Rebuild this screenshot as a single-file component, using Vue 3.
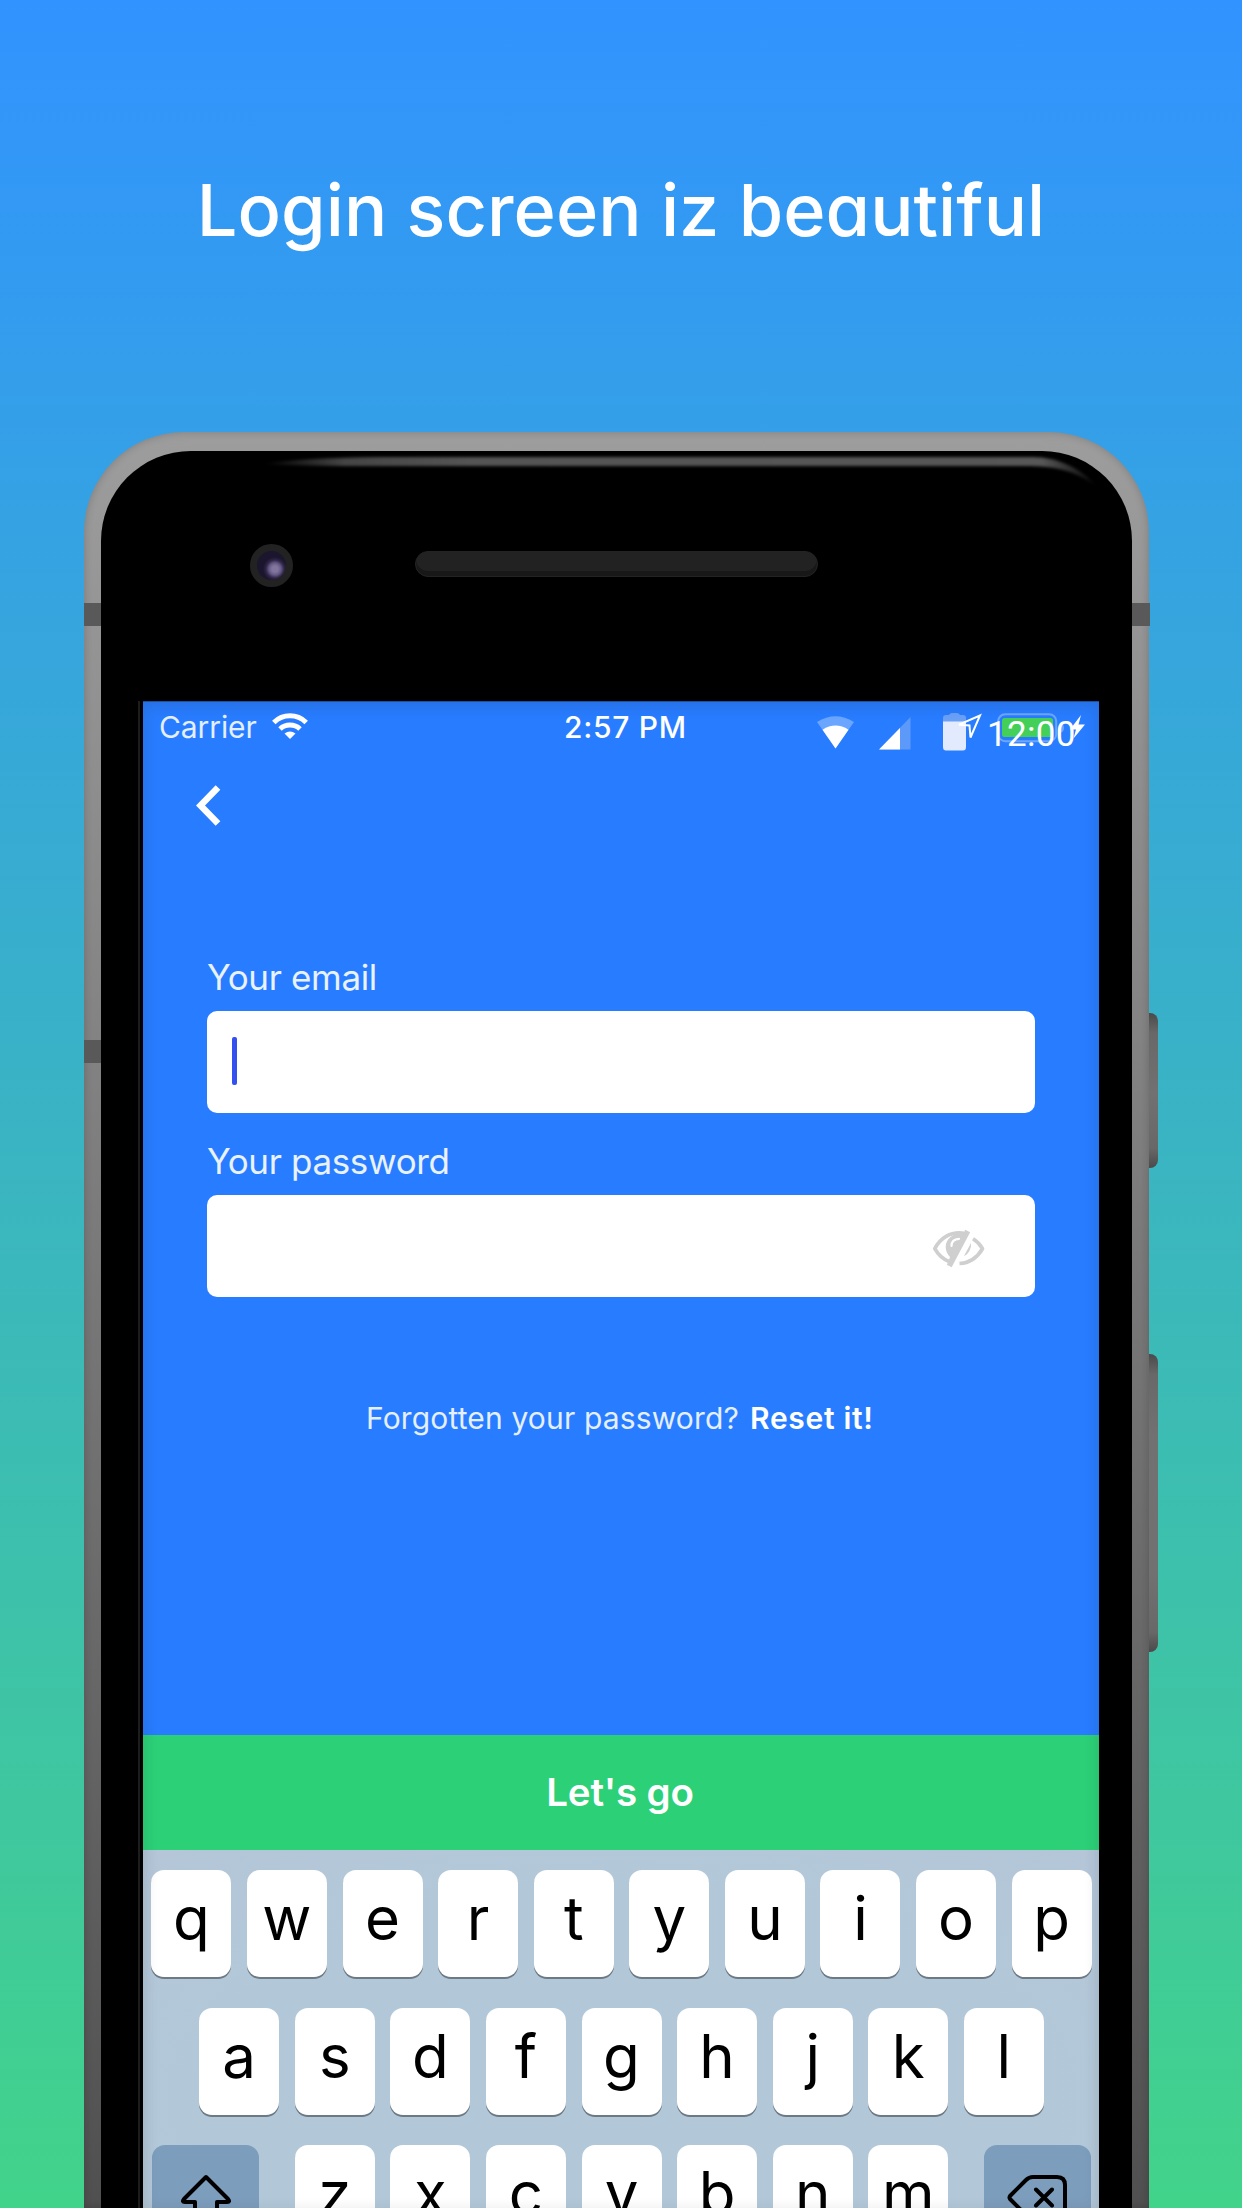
<script setup>
const topRow = 'qwertyuiop'.split('')
const middleRow = 'asdfghjkl'.split('')
const bottomRow = 'zxcvbnm'.split('')
</script>

<template>
  <main class="page">
    <h1 class="headline">Login screen iz beautiful</h1>

    <div class="phone">
      <i class="band band-left"></i>
      <i class="band band-right"></i>
      <i class="band band-lower"></i>
      <i class="side-button power"></i>
      <i class="side-button volume"></i>

      <div class="glass">
        <svg class="glare" width="1031" height="60" viewBox="0 0 1031 60">
          <defs>
            <linearGradient id="glare-fade" gradientUnits="userSpaceOnUse" x1="160" y1="0" x2="1000" y2="0">
              <stop offset="0" stop-color="#fff" stop-opacity="0" />
              <stop offset=".1" stop-color="#fff" stop-opacity=".27" />
              <stop offset=".25" stop-color="#fff" stop-opacity=".33" />
              <stop offset=".93" stop-color="#fff" stop-opacity=".34" />
              <stop offset="1" stop-color="#fff" stop-opacity="0" />
            </linearGradient>
            <filter id="glare-blur" x="-5%" y="-60%" width="110%" height="220%"><feGaussianBlur stdDeviation="1.8" /></filter>
          </defs>
          <path d="M162 13Q200 6.500 280 6H932C956 6 980 17 994 34C974 20 955 15 925 15H280Q205 15 162 13Z" fill="url(#glare-fade)" filter="url(#glare-blur)" />
        </svg>
        <div class="sensors">
          <div class="camera"></div>
          <div class="speaker"></div>
        </div>

        <section class="screen">
          <header class="status">
            <div class="carrier">
              <span>Carrier</span>
              <svg width="36" height="27" viewBox="0 0 36 27">
                <g fill="none" stroke="#fff" stroke-width="5">
                  <path d="M1.800 9.500C11 .6 25 .6 34.200 9.500" />
                  <path d="M8 16C13.500 10.800 22.500 10.800 28 16" />
                </g>
                <path d="M12.500 20.500Q18 16.500 23.500 20.500L18 26Z" fill="#fff" />
              </svg>
            </div>
            <span class="time">2:57 PM</span>
            <div class="battery-ios">
              <svg width="90" height="30" viewBox="0 0 90 30">
                <rect x="1.200" y="1.200" width="58" height="27" rx="7" fill="none" stroke="#6ca7ff" stroke-width="2" />
                <rect x="5" y="5" width="51" height="19" rx="2.500" fill="#44d058" />
                <path d="M63 10Q67 11 67 15T63 20Z" fill="#6ca7ff" />
                <path d="M84 2L73 16.500H79L76.500 25.500L88 11.500H81.500Z" fill="#fff" />
              </svg>
            </div>
            <div class="android-status">
              <svg width="37" height="33" viewBox="0 0 37 33">
                <path d="M0 6Q18.500 -5.500 37 6L18.500 32.500Z" fill="#6aa5ff" />
                <path d="M5.500 13.700Q18.500 5.500 31.500 13.700L18.500 32.500Z" fill="#fff" />
              </svg>
              <svg class="signal" width="32" height="33" viewBox="0 0 32 33">
                <path d="M31.500 0V32.500H0Z" fill="#5d99f8" />
                <path d="M21 11V32.500H0Z" fill="#fff" />
              </svg>
              <svg class="cell" width="40" height="40" viewBox="0 0 40 40">
                <path d="M3 2H6Q7 0 9 0H14Q16 0 17 2H20Q23 2 23 5V9H0V5Q0 2 3 2Z" fill="#6aa0f7" />
                <path d="M0 8.500H23V34Q23 37.500 20 37.500H3Q0 37.500 0 34Z" fill="#e1ebfd" />
                <path d="M16 11.700L37 2.500L27.500 24.500L26.500 12.500Z" fill="none" stroke="#fff" stroke-width="2" />
              </svg>
              <span class="clock">12:00</span>
            </div>
          </header>

          <nav class="back">
            <svg width="26" height="42" viewBox="0 0 26 42">
              <path d="M22 2.500L4.500 20.500L22 38.500" fill="none" stroke="#fff" stroke-width="6.500" />
            </svg>
          </nav>

          <form class="form" @submit.prevent>
            <label class="email-label">Your email</label>
            <div class="field"><i class="caret"></i></div>
            <label class="password-label">Your password</label>
            <div class="field password">
              <svg width="52" height="40" viewBox="0 0 52 40">
                <g fill="none" stroke="#cfcfcf" stroke-width="3.700" stroke-linejoin="round">
                  <path d="M31 4.300C17 2.300 7 9.500 1.800 19.700C5 25.500 9.500 30 16 32.500" />
                  <path d="M40 9.800Q46 13.500 49.500 19.700C44 29 36 34 26.500 34.500" />
                </g>
                <path d="M33.500 4C21 3 12.700 9 12.700 18C12.700 22 14.500 25.500 17 28L15 34L20 32Z" fill="#cfcfcf" />
                <path d="M34.700 2L16.200 37" stroke="#cfcfcf" stroke-width="5.500" />
                <path d="M38 14C38.500 20 35 25.500 31 27L34.500 20.500Z" fill="#cfcfcf" />
                <path d="M18.500 17C18.500 12.500 21 10 26 9.800" fill="none" stroke="#fff" stroke-width="2.200" stroke-linecap="round" />
              </svg>
            </div>
            <p class="forgotten"><span class="question">Forgotten your password?</span><b>Reset it!</b></p>
          </form>

          <button class="submit"><span>Let's go</span></button>

          <div class="keyboard">
            <div class="row">
              <span v-for="k in topRow" :key="k" class="key">{{ k }}</span>
            </div>
            <div class="row">
              <span v-for="k in middleRow" :key="k" class="key">{{ k }}</span>
            </div>
            <div class="row">
              <span class="key wide">
                <svg width="54" height="50" viewBox="0 0 54 50">
                  <path d="M27 3L49 25Q51.500 28 48 28H38V47H16V28H6Q2.500 28 5 25Z" fill="none" stroke="#000" stroke-width="4" stroke-linejoin="round" />
                </svg>
              </span>
              <span v-for="k in bottomRow" :key="k" class="key">{{ k }}</span>
              <span class="key wide">
                <svg width="62" height="48" viewBox="0 0 62 48">
                  <g fill="none" stroke="#000" stroke-width="4" stroke-linejoin="round" stroke-linecap="round">
                    <path d="M27 3H51Q59 3 59 11V36Q59 44 51 44H27Q23 44 20 41L4 25Q3 23.500 4 22L20 6Q23 3 27 3Z" />
                    <path d="M30 15.500L46 31.500M46 15.500L30 31.500" />
                  </g>
                </svg>
              </span>
            </div>
          </div>
        </section>
      </div>
    </div>
  </main>
</template>

<style>
body {
  margin: 0;
}
</style>

<style scoped>
.page {
  width: 1242px;
  height: 2208px;
  overflow: hidden;
  background: linear-gradient(#3193ff, #42d38a);
  font-family: Inter, "Liberation Sans", sans-serif;
}
.page * {
  box-sizing: border-box;
}
.headline {
  height: 432px;
  margin: 0;
  padding-top: 165px;
  color: #fff;
  font-family: Inter, Lato, sans-serif;
  font-feature-settings: "cv11";
  font-size: 72px;
  font-weight: 500;
  line-height: 90px;
  letter-spacing: .06px;
  text-align: center;
  white-space: nowrap;
}
.phone {
  position: relative;
  width: 1065px;
  height: 1776px;
  margin-left: 84px;
  padding: 19px 17px 0;
  border-radius: 100px 100px 0 0;
  background: linear-gradient(#9d9d9d, #505050);
  box-shadow: inset 0 0 8px rgba(0, 0, 0, .2);
}
.band {
  position: absolute;
  width: 18px;
  height: 23px;
  background: #595959;
}
.band-left {
  left: 0;
  top: 171px;
}
.band-right {
  right: -1px;
  top: 171px;
}
.band-lower {
  left: 0;
  top: 608px;
}
.side-button {
  position: absolute;
  left: 1065px;
  width: 9px;
  border-radius: 0 8px 8px 0;
  background: linear-gradient(#4a4a4a, #686868 20px, #717171 80px, #717171 calc(100% - 80px), #686868 calc(100% - 20px), #4a4a4a);
}
.power {
  top: 581px;
  height: 155px;
}
.volume {
  top: 922px;
  height: 298px;
}
.glass {
  position: relative;
  height: 1757px;
  padding-left: 42px;
  border-radius: 90px 90px 0 0;
  background: #000;
}
.glare {
  position: absolute;
  left: 0;
  top: 0;
}
.sensors {
  display: flex;
  align-items: flex-start;
  height: 250px;
  padding: 93px 0 0 107px;
}
.camera {
  width: 43px;
  height: 43px;
  border: 7.500px solid #222;
  border-radius: 50%;
  background: radial-gradient(circle at 18px 18px, #82769f 3px, #655a85 6px, #302747 9px, #1b152e 12px);
}
.speaker {
  width: 403px;
  height: 26px;
  margin: 7px 0 0 122px;
  border: 1px solid #232323;
  border-radius: 13px;
  background: #222;
  box-shadow: inset 0 -5px #181818;
}
.screen {
  position: relative;
  display: flex;
  flex-direction: column;
  width: 956px;
  height: 1507px;
  background: #287cff;
  box-shadow: -3px 0 #000, -5px 0 #1d1d1d;
}
.screen::after {
  content: "";
  position: absolute;
  inset: 0;
  box-shadow: inset 0 4px 15px rgba(40, 40, 40, .16), inset 0 1px rgba(0, 0, 0, .3);
  pointer-events: none;
}
.status {
  position: relative;
  display: flex;
  height: 60px;
  padding: 11px 12px 0 16px;
  color: #fff;
  font-size: 30px;
  line-height: 30px;
}
.carrier {
  display: flex;
  width: 405px;
  color: #e4efff;
}
.carrier svg {
  margin-top: 1px;
}
.carrier span {
  width: 113px;
  font-weight: 400;
  letter-spacing: -.1px;
}
.time {
  font-weight: 500;
  letter-spacing: .7px;
}
.battery-ios {
  margin-left: auto;
  padding-top: 1px;
}
.android-status {
  position: absolute;
  left: 674px;
  top: 12px;
  display: flex;
  width: 275px;
}
.android-status svg {
  margin-top: 3px;
}
.android-status .signal {
  margin: 4px 0 0 25px;
}
.android-status .cell {
  margin: 0 0 0 32px;
}
.clock {
  margin: 5px 0 0 4px;
  font-family: Roboto, sans-serif;
  font-size: 35px;
  font-weight: 400;
  line-height: 34px;
  letter-spacing: .3px;
}
.back {
  height: 186px;
  padding: 24px 0 0 53px;
}
.form {
  height: 788px;
  padding: 0 64px 0 64px;
}
.email-label,
.password-label {
  display: block;
  height: 64px;
  color: #e9f2ff;
  font-size: 35px;
  font-weight: 400;
  line-height: 60px;
  letter-spacing: -.35px;
  white-space: nowrap;
}
.password-label {
  height: 82px;
  line-height: 96px;
}
.field {
  display: flex;
  align-items: center;
  height: 102px;
  padding-left: 25px;
  border-radius: 10px;
  background: #fff;
}
.caret {
  width: 5px;
  height: 48px;
  margin-bottom: 2px;
  border-radius: 2px;
  background: #3450ef;
}
.password {
  justify-content: flex-end;
  padding: 6px 50px 0 0;
}
.forgotten {
  display: flex;
  margin: 101px 0 0 159px;
  color: #fff;
  font-size: 30px;
  line-height: 40px;
  white-space: nowrap;
}
.question {
  width: 384px;
  color: #e4efff;
  font-weight: 400;
  font-variant-ligatures: none;
  letter-spacing: .15px;
}
.forgotten b {
  font-weight: 600;
  letter-spacing: .7px;
}
.submit {
  height: 115px;
  padding: 0 2px 0 0;
  border: 0;
  background: #2cd077;
  color: #fff;
  font: 600 38.500px/115px Inter, sans-serif;
  letter-spacing: -.15px;
  white-space: nowrap;
}
.keyboard {
  display: flex;
  flex-direction: column;
  gap: 30.500px;
  height: 358px;
  padding: 20px 7px 0 8px;
  overflow: hidden;
  background: radial-gradient(ellipse at 50% 70%, #b2c8d9 60%, #b4c6d8);
}
.row {
  display: flex;
  flex: none;
  justify-content: center;
  gap: 15.600px;
}
.key {
  display: block;
  flex: none;
  width: 80px;
  height: 107px;
  border-radius: 13px;
  background: #fff;
  box-shadow: 0 2px #6d7984;
  color: #000;
  font-size: 60px;
  font-weight: 400;
  line-height: 96px;
  text-align: center;
}
.wide {
  display: flex;
  justify-content: center;
  width: 107px;
  padding-top: 29px;
  background: #7d9dbd;
}
.wide:first-child {
  margin-right: 20px;
}
.wide:last-child {
  margin-left: 20px;
}
</style>
